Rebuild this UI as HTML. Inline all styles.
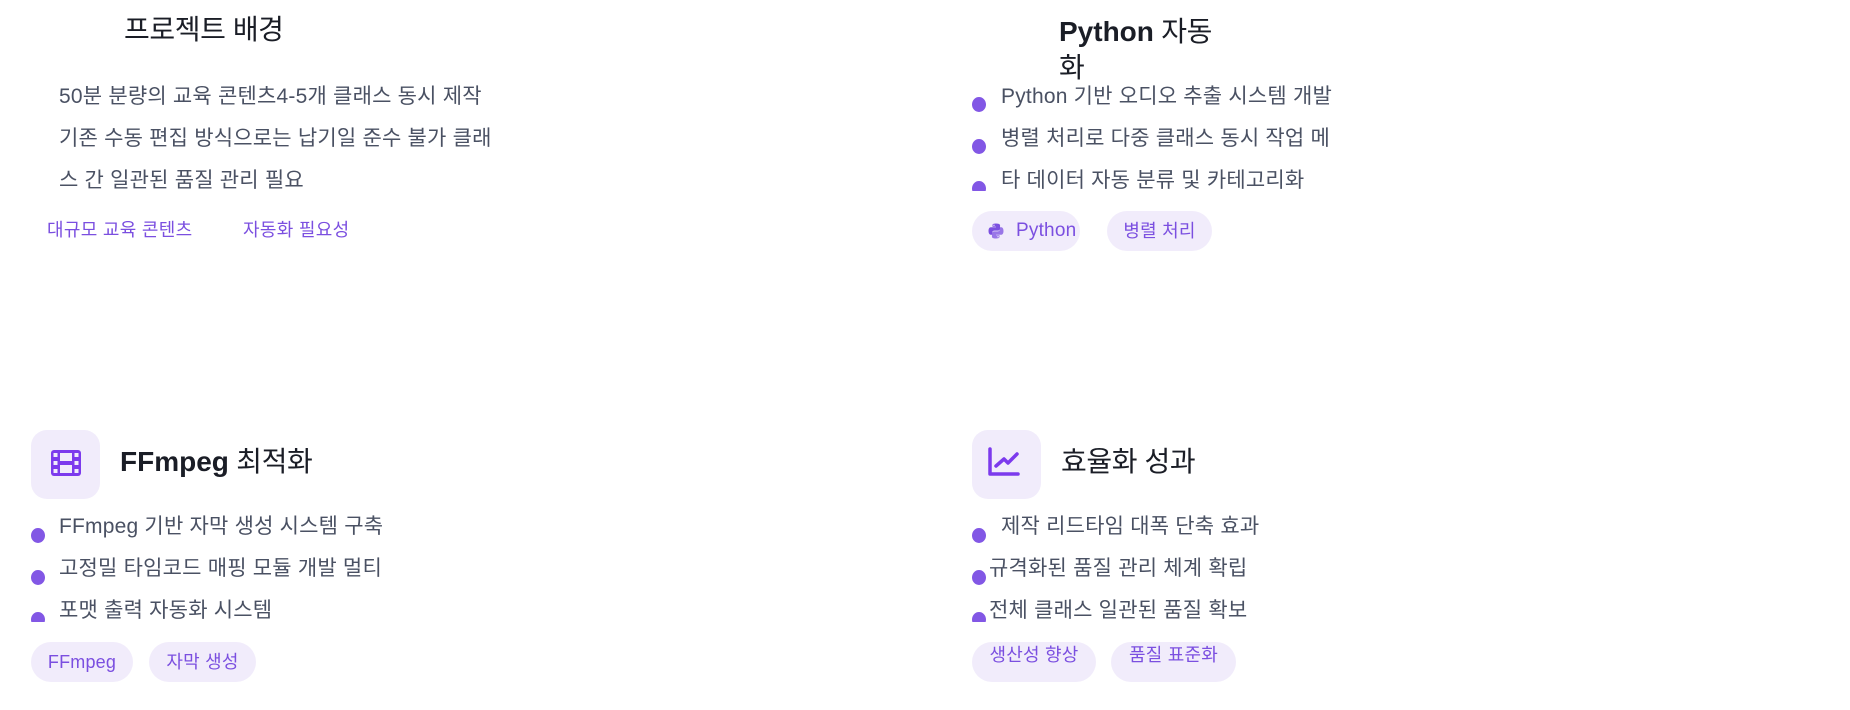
<!DOCTYPE html>
<html><head><meta charset="utf-8"><style>
*{margin:0;padding:0;box-sizing:border-box}
body{width:1850px;height:710px;background:#fff;position:relative;overflow:hidden;font-family:"Liberation Sans","Noto Sans CJK KR",sans-serif;}
.a{position:absolute;white-space:nowrap}
.h{font-size:28px;color:#1a1d26;letter-spacing:-0.4px;line-height:36px}
.h b{font-weight:700;letter-spacing:0}
.t{font-size:21px;color:#4a5163;letter-spacing:0.2px;line-height:26px}
.dot{position:absolute;width:14px;height:15px;border-radius:50%;background:#8257e5}
.tag{font-size:18px;color:#7b4fe0;letter-spacing:0.3px}
.pill{position:absolute;background:#f1ecfb;border-radius:20px;height:40px;font-size:18px;color:#7b4fe0;line-height:40px;text-align:center;letter-spacing:0.2px}
.ib{position:absolute;width:69px;height:69px;border-radius:16px;background:#f1ecfb}
</style></head><body>

<!-- top-left -->
<div class="a h" style="left:124px;top:12px">프로젝트 배경</div>
<div class="a t" style="left:59px;top:84px">50분 분량의 교육 콘텐츠4-5개 클래스 동시 제작</div>
<div class="a t" style="left:59px;top:126px">기존 수동 편집 방식으로는 납기일 준수 불가 클래</div>
<div class="a t" style="left:59px;top:168px">스 간 일관된 품질 관리 필요</div>
<div class="a tag" style="left:47px;top:216px">대규모 교육 콘텐츠</div>
<div class="a tag" style="left:243px;top:216px">자동화 필요성</div>

<!-- top-right -->
<div class="a h" style="left:1059px;top:14px"><b>Python</b> 자동</div>
<div class="a h" style="left:1059px;top:50px">화</div>
<div class="dot" style="left:972px;top:97px"></div>
<div class="a t" style="left:1001px;top:84px">Python 기반 오디오 추출 시스템 개발</div>
<div class="dot" style="left:972px;top:139px"></div>
<div class="a t" style="left:1001px;top:126px">병렬 처리로 다중 클래스 동시 작업 메</div>
<div style="position:absolute;left:972px;top:181px;width:14px;height:10px;overflow:hidden"><div class="dot" style="left:0;top:0"></div></div>
<div class="a t" style="left:1001px;top:168px">타 데이터 자동 분류 및 카테고리화</div>
<div class="pill" style="left:972px;top:211px;width:108px;text-align:left">
<svg width="18" height="18" viewBox="0 0 24 24" style="position:absolute;left:15px;top:11px"><path fill="#7b4fe0" d="M11.9 2C7 2 7.3 4.1 7.3 4.1v2.2h4.7V7H5.4S2 6.6 2 11.9s3 5.1 3 5.1h1.8v-2.5s-.1-3 2.9-3h4.9s2.8 0 2.8-2.7V4.4S17.8 2 11.9 2zM9.3 3.5a.9.9 0 110 1.8.9.9 0 010-1.8z"/><path fill="#7b4fe0" opacity=".75" d="M12.1 22c4.9 0 4.6-2.1 4.6-2.1v-2.2H12V17h6.6s3.4.4 3.4-4.9-3-5.1-3-5.1h-1.8v2.5s.1 3-2.9 3H9.4s-2.8 0-2.8 2.7v4.4S6.2 22 12.1 22zm2.6-1.5a.9.9 0 110-1.8.9.9 0 010 1.8z"/></svg>
<span style="position:absolute;left:44px;font-size:19px">Python</span></div>
<div class="pill" style="left:1107px;top:211px;width:105px">병렬 처리</div>

<!-- bottom-left -->
<div class="ib" style="left:31px;top:430px"></div>
<svg style="position:absolute;left:51px;top:450px" width="30" height="26" viewBox="0 0 30 26"><rect x="0" y="0" width="30" height="26" rx="3" fill="#7c3aed"/><rect x="9" y="3" width="12" height="8" fill="#f1ecfb"/><rect x="9" y="15" width="12" height="8" fill="#f1ecfb"/><rect x="2.5" y="3" width="4" height="4" fill="#f1ecfb"/><rect x="2.5" y="11" width="4" height="4" fill="#f1ecfb"/><rect x="2.5" y="19" width="4" height="4" fill="#f1ecfb"/><rect x="23.5" y="3" width="4" height="4" fill="#f1ecfb"/><rect x="23.5" y="11" width="4" height="4" fill="#f1ecfb"/><rect x="23.5" y="19" width="4" height="4" fill="#f1ecfb"/></svg>
<div class="a h" style="left:120px;top:444px"><b>FFmpeg</b> 최적화</div>
<div class="dot" style="left:31px;top:528px"></div>
<div class="a t" style="left:59px;top:514px">FFmpeg 기반 자막 생성 시스템 구축</div>
<div class="dot" style="left:31px;top:570px"></div>
<div class="a t" style="left:59px;top:556px">고정밀 타임코드 매핑 모듈 개발 멀티</div>
<div style="position:absolute;left:31px;top:612px;width:14px;height:10px;overflow:hidden"><div class="dot" style="left:0;top:0"></div></div>
<div class="a t" style="left:59px;top:598px">포맷 출력 자동화 시스템</div>
<div class="pill" style="left:31px;top:642px;width:102px">FFmpeg</div>
<div class="pill" style="left:149px;top:642px;width:107px">자막 생성</div>

<!-- bottom-right -->
<div class="ib" style="left:972px;top:430px"></div>
<svg style="position:absolute;left:987px;top:447px" width="34" height="30" viewBox="0 0 34 30" fill="none" stroke="#7c3aed" stroke-width="3.5" stroke-linecap="round" stroke-linejoin="round"><path d="M3 2V27H31"/><path d="M9 19L17 12L21 16L30 7"/></svg>
<div class="a h" style="left:1061px;top:444px">효율화 성과</div>
<div class="dot" style="left:972px;top:528px"></div>
<div class="a t" style="left:1001px;top:514px">제작 리드타임 대폭 단축 효과</div>
<div class="dot" style="left:972px;top:570px"></div>
<div class="a t" style="left:989px;top:556px">규격화된 품질 관리 체계 확립</div>
<div style="position:absolute;left:972px;top:612px;width:14px;height:10px;overflow:hidden"><div class="dot" style="left:0;top:0"></div></div>
<div class="a t" style="left:989px;top:598px">전체 클래스 일관된 품질 확보</div>
<div class="pill" style="left:972px;top:642px;width:124px;line-height:26px">생산성 향상</div>
<div class="pill" style="left:1111px;top:642px;width:125px;line-height:26px">품질 표준화</div>

</body></html>
